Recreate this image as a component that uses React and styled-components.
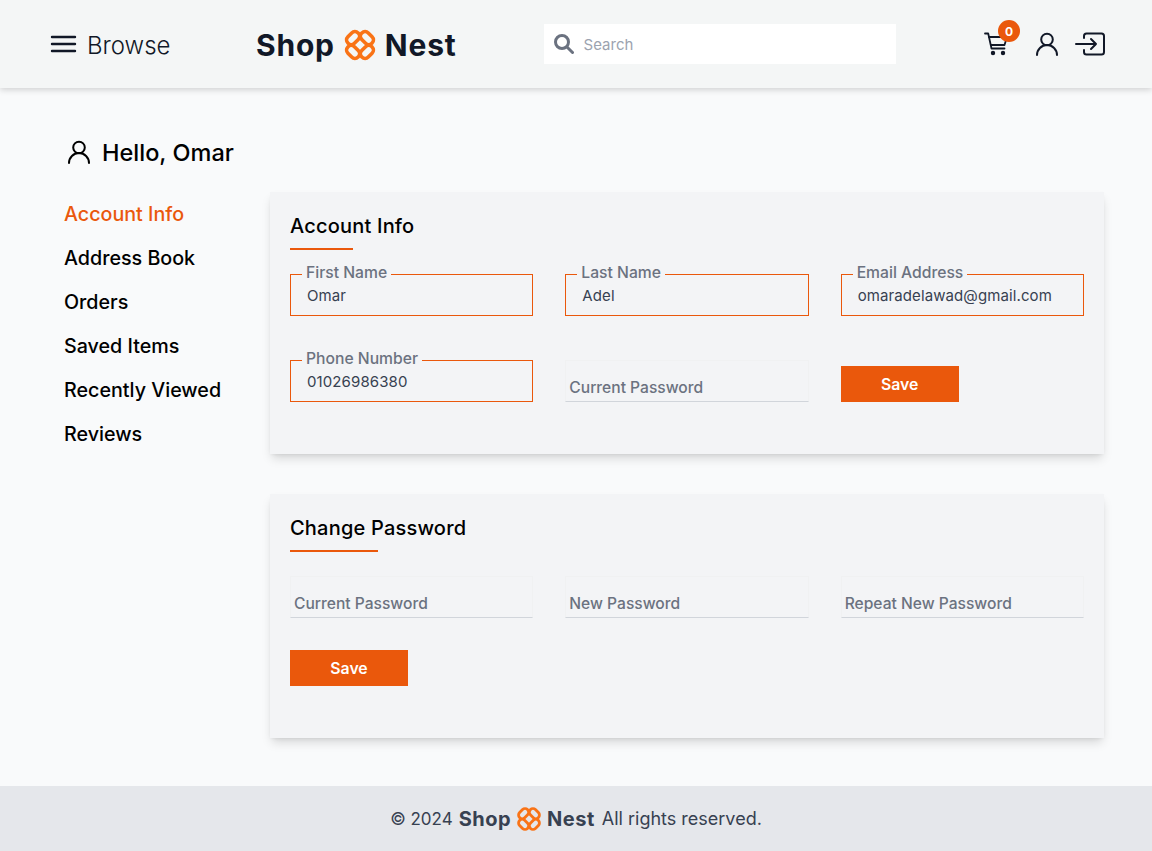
import React from "react";
import styled, { createGlobalStyle } from "styled-components";

const Global = createGlobalStyle`
  * { box-sizing: border-box; }
  html, body { margin: 0; padding: 0; }
  body { background: #f9fafb; font-family: Inter, "Noto Sans", sans-serif; color: #000; }
`;

const Page = styled.div`
  min-height: 851px;
  display: flex;
  flex-direction: column;
`;

const Header = styled.header`
  height: 88px;
  background: #f4f6f6;
  box-shadow: 0 2px 6px rgba(0, 0, 0, 0.16);
  display: flex;
  align-items: center;
  padding: 0 47px 0 49px;
`;

const Browse = styled.div`
  display: flex;
  align-items: center;
  gap: 10px;
  width: 207px;
  font-size: 24px;
  font-weight: 300;
  color: #111827;
`;

const BrowseLabel = styled.span`
  padding-top: 2px;
`;

const Logo = styled.div`
  display: flex;
  align-items: center;
  gap: ${(p) => (p.$small ? "4px" : "7px")};
  font-weight: 700;
  font-size: ${(p) => (p.$small ? "20px" : "30px")};
  letter-spacing: ${(p) => (p.$small ? "0.5px" : "0.8px")};
  color: ${(p) => (p.$small ? "#374151" : "#111827")};
  padding-top: ${(p) => (p.$small ? "0" : "2px")};
`;

const Search = styled.div`
  width: 352px;
  height: 40px;
  margin-left: 87px;
  background: #fff;
  display: flex;
  align-items: center;
  gap: 10px;
  padding-left: 10px;
  font-size: 15px;
  color: #9ca3af;
`;

const Actions = styled.div`
  margin-left: auto;
  display: flex;
  align-items: center;
  gap: 16px;
`;

const CartWrap = styled.div`
  position: relative;
  display: flex;
  margin-right: 11px;
`;

const Badge = styled.span`
  position: absolute;
  top: -12px;
  left: 14px;
  width: 22px;
  height: 22px;
  border-radius: 50%;
  background: #ea580c;
  color: #fff;
  font-size: 12px;
  font-weight: 700;
  display: flex;
  align-items: center;
  justify-content: center;
`;

const Main = styled.main`
  flex: 1;
  padding: 47px 48px 48px 64px;
`;

const Hello = styled.div`
  display: flex;
  align-items: center;
  gap: 11px;
  height: 34px;
  padding-left: 3px;
  font-size: 23.5px;
  font-weight: 500;
  margin-bottom: 23px;
`;

const Columns = styled.div`
  display: flex;
`;

const Side = styled.nav`
  width: 206px;
  flex: none;
  display: flex;
  flex-direction: column;
  gap: 16px;
  padding-top: 8px;
`;

const SideLink = styled.a`
  height: 28px;
  line-height: 28px;
  font-size: 19.7px;
  font-weight: 500;
  color: ${(p) => (p.$active ? "#ea580c" : "#000")};
`;

const Panels = styled.div`
  flex: 1;
  display: flex;
  flex-direction: column;
  gap: 40px;
`;

const Panel = styled.section`
  height: ${(p) => p.$h}px;
  background: #f3f4f6;
  box-shadow: 0 6px 10px -2px rgba(0, 0, 0, 0.15), 0 2px 4px -2px rgba(0, 0, 0, 0.1);
  padding: 20px;
`;

const Title = styled.h2`
  margin: 0 0 ${(p) => p.$after}px;
  width: fit-content;
  font-size: 20px;
  font-weight: 500;
  letter-spacing: 0.2px;
  line-height: 28px;
  height: 38px;
  position: relative;
  &::after {
    content: "";
    position: absolute;
    left: 0;
    bottom: 0;
    height: 2px;
    width: ${(p) => p.$line}px;
    background: #ea580c;
  }
`;

const Grid = styled.div`
  display: grid;
  grid-template-columns: repeat(3, 1fr);
  column-gap: 32px;
  row-gap: ${(p) => p.$gap}px;
`;

const Field = styled.fieldset`
  margin: 0;
  height: 49px;
  padding: 0 16px;
  border: 1px solid #ea580c;
  min-width: 0;
  legend {
    padding: 0 4px 2px;
    margin-left: -5px;
    font-size: 15.7px;
    font-weight: 500;
    line-height: 12px;
    color: #6b7280;
  }
  div {
    font-size: 15px;
    letter-spacing: 0.1px;
    line-height: 22px;
    margin-top: 4px;
    color: #374151;
  }
`;

const Empty = styled.div`
  height: 42px;
  margin-top: 7px;
  border-bottom: 1px solid #d1d5db;
  border-left: 1px solid #f0f1f2;
  border-right: 1px solid #f0f1f2;
  border-top: 1px solid #f0f1f2;
  padding: 16px 3px 0;
  font-size: 15.6px;
  font-weight: 500;
  line-height: 22px;
  color: #6b7280;
`;

const Save = styled.button`
  width: 118px;
  height: 36px;
  align-self: end;
  border: 0;
  padding: 0;
  background: #ea580c;
  color: #fff;
  font: 600 15.8px Inter, sans-serif;
`;

const Footer = styled.footer`
  height: 65px;
  background: #e5e7eb;
  display: flex;
  align-items: center;
  justify-content: center;
  gap: 6px;
  font-size: 17px;
  color: #374151;
`;

const Rights = styled.span`
  font-size: 18px;
  margin-left: 1px;
`;

const Flower = ({ size }) => (
  <svg width={size} height={size} viewBox="0 0 32 32" fill="none" stroke="#f97316" strokeWidth="3.2">
    <rect x="3.45" y="5.75" width="12.8" height="8.2" rx="4" transform="rotate(-45 9.85 9.85)" />
    <rect x="15.75" y="5.75" width="12.8" height="8.2" rx="4" transform="rotate(45 22.15 9.85)" />
    <rect x="3.45" y="18.05" width="12.8" height="8.2" rx="4" transform="rotate(45 9.85 22.15)" />
    <rect x="15.75" y="18.05" width="12.8" height="8.2" rx="4" transform="rotate(-45 22.15 22.15)" />
  </svg>
);

const Line = ({ w = 24, h = 24, sw = 2, color = "#111827", children }) => (
  <svg width={w} height={h} viewBox={`0 0 ${w} ${h}`} fill="none" stroke={color} strokeWidth={sw} strokeLinecap="round" strokeLinejoin="round">
    {children}
  </svg>
);

const UserIcon = ({ color }) => (
  <Line color={color}>
    <circle cx="12" cy="7.5" r="5.8" />
    <path d="M2 23a10 10 0 0 1 20 0" />
  </Line>
);

const fields = [
  ["First Name", "Omar"],
  ["Last Name", "Adel"],
  ["Email Address", "omaradelawad@gmail.com"],
  ["Phone Number", "01026986380"],
];

const links = ["Account Info", "Address Book", "Orders", "Saved Items", "Recently Viewed", "Reviews"];

export default function App() {
  return (
    <Page>
      <Global />
      <Header>
        <Browse>
          <Line w={28} h={28} sw={2.4}><path d="M3 7h23M3 14h23M3 21h23" /></Line>
          <BrowseLabel>Browse</BrowseLabel>
        </Browse>
        <Logo>Shop <Flower size={36} /> Nest</Logo>
        <Search>
          <svg width="20" height="20" viewBox="0 0 20 20" fill="none" stroke="#6b7280" strokeWidth="3" strokeLinecap="round"><circle cx="8" cy="8" r="6.5" /><path d="M13 13l5.5 5.5" /></svg>
          Search
        </Search>
        <Actions>
          <CartWrap>
            <Line sw={1.8}>
              <path d="M1 1.5h3.2l3.3 15h13" />
              <path d="M5 5h18l-2.5 8H7" />
              <circle cx="9" cy="21" r="1.3" fill="#111827" />
              <circle cx="19" cy="21" r="1.3" fill="#111827" />
            </Line>
            <Badge>0</Badge>
          </CartWrap>
          <UserIcon />
          <Line w={30}>
            <path d="M1 12h20M16 7l5 5-5 5" />
            <path d="M9 6V4a2.5 2.5 0 0 1 2.5-2.5h15A2.5 2.5 0 0 1 29 4v16a2.5 2.5 0 0 1-2.5 2.5h-15A2.5 2.5 0 0 1 9 20v-2" />
          </Line>
        </Actions>
      </Header>
      <Main>
        <Hello><UserIcon color="#000" />Hello, Omar</Hello>
        <Columns>
          <Side>
            {links.map((l, i) => <SideLink key={l} $active={i === 0}>{l}</SideLink>)}
          </Side>
          <Panels>
            <Panel $h={262}>
              <Title $line={63} $after={17}>Account Info</Title>
              <Grid $gap={37}>
                {fields.map(([l, v]) => (
                  <Field key={l}><legend>{l}</legend><div>{v}</div></Field>
                ))}
                <Empty>Current Password</Empty>
                <Save>Save</Save>
              </Grid>
            </Panel>
            <Panel $h={244}>
              <Title $line={88} $after={17}>Change Password</Title>
              <Grid $gap={32}>
                <Empty>Current Password</Empty>
                <Empty>New Password</Empty>
                <Empty>Repeat New Password</Empty>
                <Save>Save</Save>
              </Grid>
            </Panel>
          </Panels>
        </Columns>
      </Main>
      <Footer>
        © 2024 <Logo $small>Shop <Flower size={28} /> Nest</Logo> <Rights>All rights reserved.</Rights>
      </Footer>
    </Page>
  );
}
